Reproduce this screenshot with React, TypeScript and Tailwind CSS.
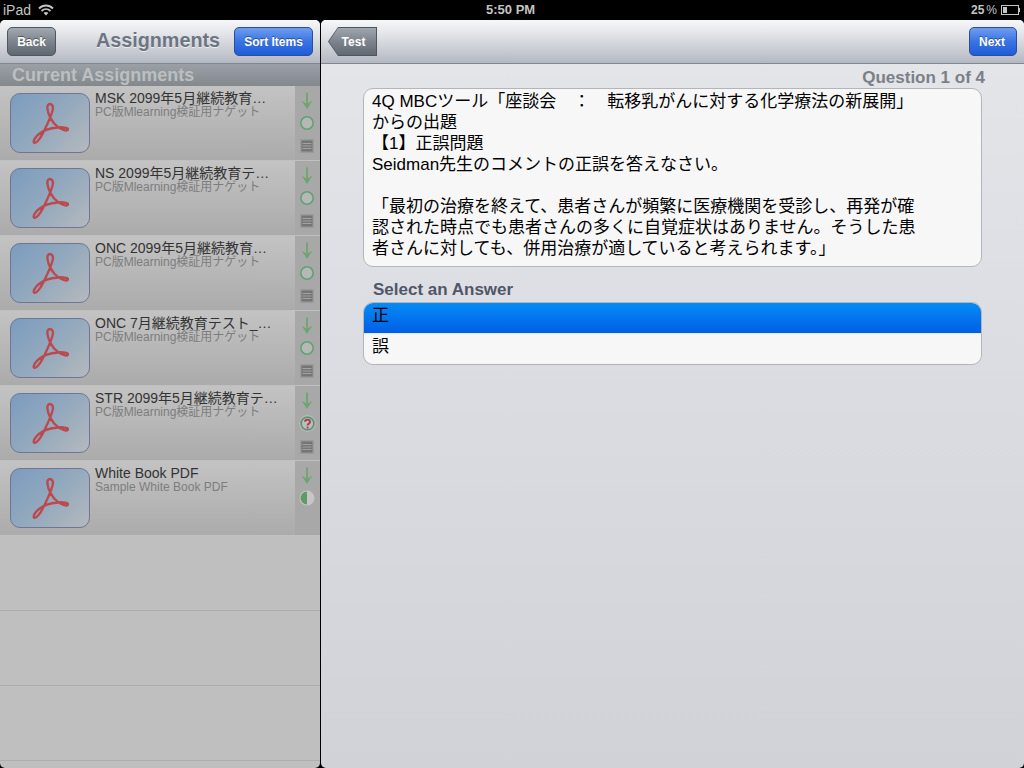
// iPad assignment viewer: assignments list on the left, test question on the right.
import type { ReactNode } from "react";

type Status = "circle" | "question" | "half";

type Assignment = {
  title: string;
  subtitle: string;
  status: Status;
  notes: boolean;
};

const nugget = "PC版Mlearning検証用ナゲット";

const assignments: Assignment[] = [
  { title: "MSK 2099年5月継続教育…", subtitle: nugget, status: "circle", notes: true },
  { title: "NS 2099年5月継続教育テ…", subtitle: nugget, status: "circle", notes: true },
  { title: "ONC 2099年5月継続教育…", subtitle: nugget, status: "circle", notes: true },
  { title: "ONC 7月継続教育テスト_…", subtitle: nugget, status: "circle", notes: true },
  { title: "STR 2099年5月継続教育テ…", subtitle: nugget, status: "question", notes: true },
  { title: "White Book PDF", subtitle: "Sample White Book PDF", status: "half", notes: false },
];

const sans = "font-['Liberation_Sans','Noto_Sans_CJK_JP',sans-serif]";

function NavButton({ children, blue, className }: { children: ReactNode; blue?: boolean; className: string }) {
  return (
    <button
      type="button"
      className={
        "flex h-[29px] items-center justify-center rounded-[5px] border text-[12px] font-bold text-white [text-shadow:0_-1px_0_rgba(0,0,0,0.4)] " +
        (blue
          ? "border-[#2a4f94] bg-[linear-gradient(#6f9df0,#3a74e2_50%,#1f5cd6)] "
          : "border-[#50565e] bg-[linear-gradient(#a3a9b1,#7d848d_50%,#5f6770)] ") +
        className
      }
    >
      {children}
    </button>
  );
}

function DownArrow() {
  return (
    <svg width="12" height="18" viewBox="0 0 12 18" fill="none" aria-hidden="true">
      <path d="M6 0.5V15" stroke="#6ea56e" strokeWidth="1.8" />
      <path d="M0.5 8.5L6 17L11.5 8.5L6 12Z" fill="#6ea56e" />
    </svg>
  );
}

function StatusIcon({ status }: { status: Status }) {
  if (status === "circle") {
    return (
      <svg width="16" height="16" viewBox="0 0 16 16" aria-hidden="true">
        <circle cx="8" cy="8" r="6.2" fill="#b5b8b5" stroke="#62a077" strokeWidth="1.6" />
      </svg>
    );
  }
  if (status === "question") {
    return (
      <svg width="17" height="17" viewBox="0 0 17 17" aria-hidden="true">
        <circle cx="8.5" cy="8.5" r="8.2" fill="#c0c0c0" />
        <circle cx="8.5" cy="8.5" r="6.4" fill="#bdbdbd" stroke="#5f9478" strokeWidth="1.8" />
        <path d="M6 6.8C6.2 4 11 4 11 6.9C11 8.6 8.6 8.6 8.6 10.4" fill="none" stroke="#a8444a" strokeWidth="2" />
        <circle cx="8.6" cy="12.6" r="1.1" fill="#a8444a" />
      </svg>
    );
  }
  return (
    <svg width="16" height="16" viewBox="0 0 16 16" aria-hidden="true">
      <circle cx="8" cy="8" r="7.5" fill="#c6c6c6" />
      <path d="M8 1.5A6.5 6.5 0 0 0 8 14.5Z" fill="#5f9a68" />
    </svg>
  );
}

function NotesIcon() {
  return (
    <svg width="14" height="14" viewBox="0 0 14 14" aria-hidden="true">
      <rect x="0" y="0" width="14" height="14" fill="#9b9b9b" />
      <rect x="1.5" y="1.5" width="11" height="11" fill="#757575" />
      <path d="M2.5 4.5H11.5M2.5 7H11.5M2.5 9.5H11.5" stroke="#a2a2a2" strokeWidth="1" />
    </svg>
  );
}

function PdfThumb() {
  return (
    <div className="flex h-[60px] w-[80px] shrink-0 items-center justify-center rounded-[10px] border border-[#6e7596] bg-[linear-gradient(135deg,#7b9cbf,#93a9bd_50%,#b5b9bd)]">
      <svg width="38" height="44" viewBox="0 0 38 44" fill="none" aria-hidden="true">
        <path
          d="M19 3C17 3 16 5 16.5 8C17 13 21 22 27 26C30 28 36 31 37 28.5C37.5 26.5 31 26 27 26.5C20 27 12 29.5 8 33C4 36 2 40 3 41.5C5 43 9 38 12 32C15 26 21.5 12 22 7C22 4.5 20.5 3 19 3Z"
          stroke="#bb4a4f"
          strokeWidth="2.4"
          strokeLinejoin="round"
        />
      </svg>
    </div>
  );
}

function AssignmentRow({ item }: { item: Assignment }) {
  return (
    <div className="flex h-[74px] bg-[linear-gradient(#c3c3c3,#ababab)]">
      <div className="flex min-w-0 flex-1 pl-[10px] pt-[7px]">
        <PdfThumb />
        <div className="-mt-[2px] ml-[5px] min-w-0 flex-1 whitespace-nowrap">
          <div className="text-[14px] leading-[14px] text-[#333333]">{item.title}</div>
          <div className="text-[12px] leading-[14px] text-[#7d7d7d]">{item.subtitle}</div>
        </div>
      </div>
      <div className="flex w-[25px] shrink-0 flex-col items-center bg-[#a8a8a8] pr-px pt-[6px]">
        <DownArrow />
        <div className="mt-[5px]">
          <StatusIcon status={item.status} />
        </div>
        {item.notes ? (
          <div className="mt-[8px]">
            <NotesIcon />
          </div>
        ) : null}
      </div>
    </div>
  );
}

function StatusBar() {
  return (
    <div className="relative flex h-5 shrink-0 items-center justify-between bg-black px-[3px] text-[#c4c4c4]">
      <div className="flex items-center gap-[7px] text-[14px]">
        <span>iPad</span>
        <svg width="16" height="12" viewBox="0 0 16 12" fill="none" aria-hidden="true">
          <path d="M1 4.5C5 0.5 11 0.5 15 4.5M3.5 7C6.2 4.4 9.8 4.4 12.5 7" stroke="#c4c4c4" strokeWidth="1.8" />
          <path d="M8 11.5L5.6 9C7 7.8 9 7.8 10.4 9Z" fill="#c4c4c4" />
        </svg>
      </div>
      <span className="absolute left-[486px] text-[13px] font-bold">5:50 PM</span>
      <div className="flex items-center gap-[4px] pr-[1px] text-[12px]">
        <span className="font-bold">
          25<span className="ml-[2px] font-normal">%</span>
        </span>
        <div className="flex items-center">
          <div className="h-[10px] w-[18px] border border-[#c4c4c4] p-[1px]">
            <div className="h-full w-[4px] bg-[#c4c4c4]" />
          </div>
          <div className="h-[4px] w-[1px] bg-[#c4c4c4]" />
        </div>
      </div>
    </div>
  );
}

function LeftPanel() {
  return (
    <aside className="flex w-[320px] shrink-0 flex-col overflow-hidden rounded-[5px] bg-[#bfbfbf]">
      <header className="flex h-[44px] shrink-0 items-center border-b border-[#7f8792] bg-[linear-gradient(#f6f7f9,#e4e6ea_30%,#b4b8c2)] pl-[7px] pr-[7px]">
        <NavButton className="w-[49px]">Back</NavButton>
        <h1 className="flex-1 pb-[2px] pl-[26px] text-center text-[19.8px] font-bold text-[#6d7583] [text-shadow:0_1px_0_rgba(255,255,255,0.6)]">
          Assignments
        </h1>
        <NavButton blue className="w-[79px]">
          Sort Items
        </NavButton>
      </header>
      <div className="flex h-[22px] shrink-0 items-center bg-[linear-gradient(#9aa0a5,#82888c)] pl-[12px] text-[18px] font-bold text-[#bcbfc1]">
        Current Assignments
      </div>
      <div className="flex-1 overflow-hidden">
        {assignments.map((item) => (
          <div key={item.title} className="border-b border-[#c0c0c0]">
            <AssignmentRow item={item} />
          </div>
        ))}
        <div className="h-[75px] border-b border-[#adadad]" />
        <div className="h-[75px] border-b border-[#adadad]" />
        <div className="h-[75px] border-b border-[#adadad]" />
      </div>
    </aside>
  );
}

function RightPanel() {
  return (
    <main className="flex min-w-0 flex-1 flex-col overflow-hidden rounded-[5px] bg-[linear-gradient(#e4e6ea,#d0d2d8)]">
      <header className="flex h-[44px] shrink-0 items-center justify-between border-b border-[#7f8792] bg-[linear-gradient(#f6f7f9,#e4e6ea_30%,#b4b8c2)] pl-[7px] pr-[7px]">
        <div className="h-[29px] w-[49px] bg-[#50565e] [clip-path:polygon(0_50%,10px_0,100%_0,100%_100%,10px_100%)]">
          <div className="flex h-full items-center justify-center bg-[linear-gradient(#a3a9b1,#7d848d_50%,#5f6770)] pl-[2px] text-[12px] font-bold text-white [clip-path:polygon(1px_50%,10px_1px,calc(100%_-_1px)_1px,calc(100%_-_1px)_calc(100%_-_1px),10px_calc(100%_-_1px))]">
            Test
          </div>
        </div>
        <NavButton blue className="w-[48px]">
          <span className="pr-[2px]">Next</span>
        </NavButton>
      </header>
      <div className="flex flex-col px-[42px]">
        <div className="-mr-[3px] flex h-[24px] items-start justify-end pt-[4px] text-[17px] font-bold leading-[20px] text-[#7b7f86]">
          Question 1 of 4
        </div>
        <div className="h-[179px] rounded-[10px] border border-[#b4b5b9] bg-[#f7f7f7] pl-[8px] pt-[2px] text-[17px] leading-[21px] text-black">
          <p>4Q MBCツール「座談会　：　転移乳がんに対する化学療法の新展開」</p>
          <p>からの出題</p>
          <p>【1】正誤問題</p>
          <p>Seidman先生のコメントの正誤を答えなさい。</p>
          <p>&nbsp;</p>
          <p>「最初の治療を終えて、患者さんが頻繁に医療機関を受診し、再発が確</p>
          <p>認された時点でも患者さんの多くに自覚症状はありません。そうした患</p>
          <p>者さんに対しても、併用治療が適していると考えられます。」</p>
        </div>
        <div className="mt-[13px] pl-[10px] text-[17px] font-bold leading-[20px] text-[#505669]">Select an Answer</div>
        <div className="mt-[2px] overflow-hidden rounded-[10px] border border-[#b4b5b9] bg-[#f7f7f7] text-[17px] text-black">
          <div className="flex h-[30px] items-center bg-[linear-gradient(#058cf5,#015fe6)] pb-[4px] pl-[8px]">正</div>
          <div className="flex h-[31px] items-center border-t border-[#e8e8e8] pb-[4px] pl-[8px]">誤</div>
        </div>
      </div>
    </main>
  );
}

export default function App() {
  return (
    <div className={"flex h-[768px] w-[1024px] flex-col overflow-hidden bg-black " + sans}>
      <StatusBar />
      <div className="flex min-h-0 flex-1 gap-px">
        <LeftPanel />
        <RightPanel />
      </div>
    </div>
  );
}
